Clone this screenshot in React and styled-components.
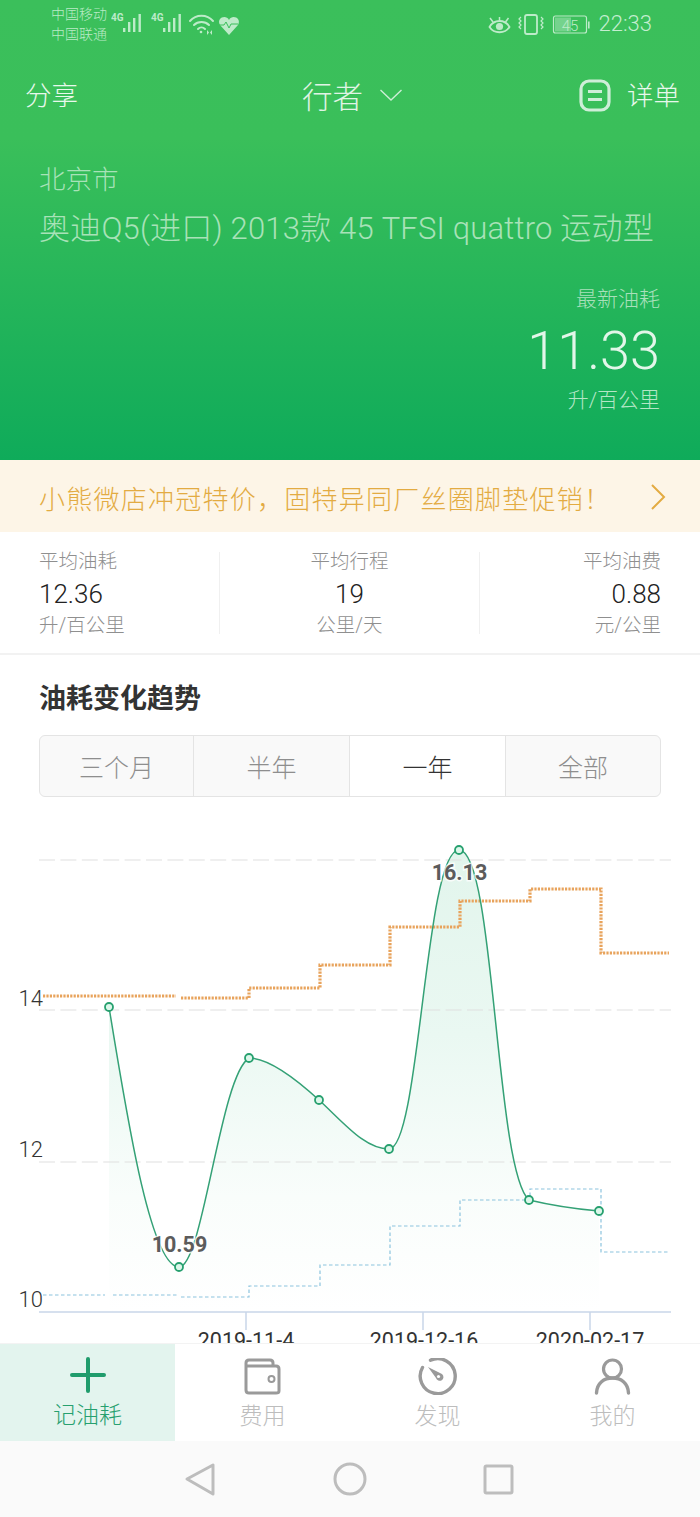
import React from "react";
import styled, { createGlobalStyle } from "styled-components";

const Global = createGlobalStyle`
  html, body { margin: 0; padding: 0; background: #fff; }
  body { font-family: Roboto, "Noto Sans CJK SC", sans-serif; }
  * { box-sizing: border-box; }
`;

const Page = styled.div`
  width: 700px; height: 1517px; display: flex; flex-direction: column; overflow: hidden; background: #fff;
`;
const Hero = styled.header`
  height: 460px; flex: none; display: flex; flex-direction: column;
  background: linear-gradient(180deg, #3bbf5b 0%, #3abf5a 30%, #0fab5a 100%);
  color: #e4f6e8;
`;
const StatusBar = styled.div`
  height: 46px; display: flex; align-items: flex-start; padding: 3px 48px 0 51px;
`;
const Carrier = styled.div`
  width: 60px; font-size: 14px; line-height: 20px; font-weight: 300; color: #b9eac6; white-space: nowrap; padding-top: 1px;
`;
const StatusIcons = styled.svg`
  display: block; flex: none; color: #bdebc9;
`;
const Time = styled.div`
  margin-left: 8px; font-size: 22px; line-height: 42px; font-weight: 300; color: #c4eed0;
`;
const Spacer = styled.div` flex: 1; `;
const NavRow = styled.nav`
  height: 100px; display: grid; grid-template-columns: 1fr auto 1fr; align-items: center; padding: 0 20px 0 25px;
`;
const NavText = styled.span`
  font-size: 26.5px; font-weight: 300; line-height: 36px; color: #e8f8ec; white-space: nowrap;
`;
const NavTitle = styled.div`
  display: flex; align-items: center; gap: 16px; margin-top: -3px; font-size: 30.5px; font-weight: 300; color: #e0f4e5;
`;
const NavRight = styled.div`
  display: flex; align-items: center; justify-content: flex-end; gap: 15px;
`;
const Info = styled.div`
  padding: 17px 40px 0 39px; color: #a8e2b8; font-weight: 300;
`;
const City = styled.div` font-size: 26.5px; line-height: 34px; `;
const Car = styled.div` margin-top: 12px; font-size: 31px; line-height: 40px; letter-spacing: 0.2px; white-space: nowrap; `;
const Latest = styled.div`
  margin-top: 36px; text-align: right; font-size: 21px; line-height: 28px; color: #a9e0bb;
`;
const Big = styled.div`
  margin-top: 8px; text-align: right; font-size: 54px; line-height: 60px; font-weight: 300; color: #e2f6e9;
`;
const Unit = styled.div`
  margin-top: 5px; text-align: right; font-size: 21px; line-height: 28px; color: #b4e6c6;
`;
const Banner = styled.div`
  height: 72px; flex: none; display: flex; align-items: center; justify-content: space-between;
  padding: 2px 34px 0 39px; background: #fdf5e7; color: #e3ab42; font-size: 26px; font-weight: 300; letter-spacing: 1.25px;
  white-space: nowrap;
`;
const Stats = styled.section`
  height: 123px; flex: none; padding: 20px 39px 0 39px; border-bottom: 2px solid #f2f2f2;
  display: grid; grid-template-columns: 180px 261px 181px; align-items: start;
`;
const Stat = styled.div`
  height: 82px; text-align: ${p => p.$align};
  border-left: ${p => (p.$divided ? "1px solid #f0f0f0" : "none")};
  border-right: ${p => (p.$divided ? "1px solid #f0f0f0" : "none")};
`;
const StatLabel = styled.div` font-size: 19.5px; line-height: 20px; font-weight: 300; color: #8f8f8f; `;
const StatValue = styled.div` margin-top: 4px; font-size: 26px; line-height: 36px; font-weight: 300; color: #222; `;
const StatUnit = styled.div` margin-top: 3px; font-size: 19.5px; line-height: 22px; font-weight: 300; color: #8f8f8f; `;
const SectionTitle = styled.h2`
  margin: 26px 39px 0; font-size: 27px; line-height: 36px; font-weight: 700; color: #333;
`;
const Tabs = styled.div`
  margin: 18px 39px 0; height: 62px; flex: none; display: grid; grid-template-columns: 153px 156px 156px 155px;
  border: 1px solid #e4e4e4; border-radius: 6px; overflow: hidden; background: #f9f9f9;
`;
const RangeTab = styled.div`
  display: flex; align-items: center; justify-content: center; font-size: 25px; font-weight: 300;
  color: ${p => (p.$active ? "#333" : "#8e8e8e")}; background: ${p => (p.$active ? "#fff" : "transparent")};
  border-left: ${p => (p.$first ? "none" : "1px solid #e4e4e4")};
`;
const ChartBox = styled.div` height: 546px; flex: none; overflow: hidden; `;
const ChartSvg = styled.svg` display: block; font-family: Roboto, sans-serif; `;
const TabBar = styled.div`
  height: 98px; flex: none; display: grid; grid-template-columns: repeat(4, 175px); background: #fff;
  border-top: 1px solid #f3f3f3;
`;
const TabItem = styled.div`
  display: flex; flex-direction: column; align-items: center; padding-top: ${p => (p.$active ? "13px" : "14px")};
  background: ${p => (p.$active ? "#e3f4ee" : "#fff")};
`;
const TabIcon = styled.svg` display: block; flex: none; `;
const TabLabel = styled.span`
  margin-top: ${p => (p.$active ? "8px" : "7px")}; font-size: 23px; line-height: 30px; font-weight: 300;
  color: ${p => (p.$active ? "#27a06f" : "#bdbdbd")};
`;
const SystemBar = styled.div`
  height: 76px; flex: none; background: #fafafa; display: flex; align-items: center; justify-content: center;
`;
const SystemIcons = styled.svg` display: block; `;

const pts = [[109,1007],[179,1267],[249,1058],[319,1100],[389,1149],[459,850],[529,1200],[599,1211]];
const curve = "M109 1007 C126 1110 150 1267 179 1267 C203 1267 220 1076 249 1058 C268 1058 295 1078 319 1100 C345 1124 365 1149 389 1149 C420 1149 425 850 459 850 C495 850 495 1170 529 1200 C550 1205 575 1209 599 1211";
const orangeD = "M43 996H176M181 998H249V988H320V965H390V927H460V901H530V889H601V953H669";
const blueD = "M43 1295H105M113 1295H178M181 1297H249V1286H320V1265H390V1226H460V1200H530V1189H601V1252H669";

function Chart() {
  return (
    <ChartSvg width="700" height="546" viewBox="0 797 700 546">
      <defs>
        <linearGradient id="area" gradientUnits="userSpaceOnUse" x1="0" y1="850" x2="0" y2="1312">
          <stop offset="0" stopColor="#e2f5ec" />
          <stop offset="0.4" stopColor="#eaf8f2" />
          <stop offset="0.75" stopColor="#f9fdfb" />
          <stop offset="1" stopColor="#ffffff" />
        </linearGradient>
      </defs>
      <path d={`${curve} V1312 H109 Z`} fill="url(#area)" />
      {[860, 1010, 1162].map(y => (
        <line key={y} x1="39" x2="671" y1={y} y2={y} stroke="#e0e0e0" strokeWidth="1.2" strokeDasharray="16 5.4" />
      ))}
      <path d={orangeD} fill="none" stroke="#e8a35c" strokeWidth="3.2" strokeDasharray="2.2 1.2" />
      <path d={blueD} fill="none" stroke="#8cc4de" strokeWidth="1.2" strokeDasharray="3.5 2.5" />
      <path d={curve} fill="none" stroke="#34a176" strokeWidth="1.5" />
      {pts.map(([x, y]) => (
        <circle key={x} cx={x} cy={y} r="4" fill="#dcf7ea" stroke="#27a06f" strokeWidth="1.8" />
      ))}
      <g fontSize="21.5" fontWeight="700" fill="#5c5c5c" textAnchor="middle" stroke="#ffffff" strokeWidth="3" strokeOpacity="0.75" style={{ paintOrder: "stroke" }}>
        <text x="179.5" y="1252">10.59</text>
        <text x="459.5" y="880">16.13</text>
      </g>
      <line x1="39" x2="671" y1="1312" y2="1312" stroke="#c9d6e8" strokeWidth="1.5" />
      {[246, 423, 590].map(x => (
        <line key={x} x1={x} x2={x} y1="1312" y2="1330" stroke="#c9d6e8" strokeWidth="1.5" />
      ))}
      <g fontSize="22" fill="#333" fontWeight="300" textAnchor="end">
        <text x="43" y="1006">14</text>
        <text x="43" y="1157">12</text>
        <text x="43" y="1307">10</text>
      </g>
      <g fontSize="21.5" fill="#333" textAnchor="middle">
        <text x="246" y="1348">2019-11-4</text>
        <text x="424" y="1348">2019-12-16</text>
        <text x="590" y="1348">2020-02-17</text>
      </g>
    </ChartSvg>
  );
}

const bars = x => (
  <g fill="currentColor">
    <rect x={x} y="28" width="2.4" height="4" />
    <rect x={x + 5} y="22" width="2.4" height="10" />
    <rect x={x + 10} y="18" width="2.4" height="14" />
    <rect x={x + 15.5} y="14" width="2.4" height="18" />
  </g>
);

function StatusLeft() {
  return (
    <StatusIcons width="132" height="40" viewBox="111 3 132 40">
      <g fontSize="10" fontWeight="700" fill="currentColor" fontFamily="Roboto, sans-serif">
        <text x="111" y="21">4G</text>
        <text x="151" y="21">4G</text>
      </g>
      {bars(123)}
      {bars(163)}
      <g fill="none" stroke="currentColor" strokeWidth="2" strokeLinecap="round">
        <path d="M190 21 C196 14 207 14 213 21" />
        <path d="M194 25 C198 21 205 21 209 25" />
        <path d="M198 29 C200 27 203 27 205 29" />
      </g>
      <circle cx="201" cy="32" r="1.3" fill="currentColor" />
      <path d="M207 30l2 2.5-2 2.5zM212 30l-2 2.5 2 2.5z" fill="currentColor" />
      <path d="M229 35 L220 25 C216 18 226 14 229 20 C232 14 242 18 238 25 Z" fill="currentColor" />
      <path d="M219 25h5l2-3 3 6 2-4h7" fill="none" stroke="#3bbf5b" strokeWidth="1" />
    </StatusIcons>
  );
}

function StatusRight() {
  return (
    <StatusIcons width="103" height="40" viewBox="490 3 103 40">
      <g fill="none" stroke="currentColor" strokeWidth="1.8">
        <path d="M491.5 27 C496 19 507 19 511.5 27 C507 34 496 34 491.5 27Z" />
        <path d="M492 18l3 4M507.5 22l3-4M501.5 17v3" strokeWidth="1.5" />
      </g>
      <circle cx="501.5" cy="26.5" r="3.6" fill="currentColor" />
      <rect x="527" y="15" width="12" height="19" rx="2" fill="none" stroke="currentColor" strokeWidth="1.8" />
      <path d="M523 17l-2 2 2 2-2 2 2 2-2 2 2 2M543 17l2 2-2 2 2 2-2 2 2 2-2 2" fill="none" stroke="currentColor" strokeWidth="1.2" />
      <rect x="555.5" y="16" width="33" height="17" rx="2" fill="none" stroke="currentColor" strokeWidth="1.2" />
      <rect x="557" y="17.5" width="16" height="14" fill="currentColor" opacity="0.45" />
      <rect x="590" y="21.5" width="1.6" height="7" fill="currentColor" />
      <text x="572" y="30.5" textAnchor="middle" fontSize="15" fontWeight="300" fill="currentColor" fontFamily="Roboto, sans-serif">45</text>
    </StatusIcons>
  );
}

function App() {
  return (
    <Page>
      <Global />
      <Hero>
        <StatusBar>
          <Carrier>中国移动<br />中国联通</Carrier>
          <StatusLeft />
          <Spacer />
          <StatusRight />
          <Time>22:33</Time>
        </StatusBar>
        <NavRow>
          <NavText>分享</NavText>
          <NavTitle>
            行者
            <svg width="24" height="14" viewBox="0 0 24 14">
              <path d="M1.5 2 L12 12 L22.5 2" fill="none" stroke="#cdeed6" strokeWidth="1.4" />
            </svg>
          </NavTitle>
          <NavRight>
            <svg width="33" height="34" viewBox="0 0 33 34">
              <rect x="2" y="2" width="28" height="29" rx="8" fill="none" stroke="#cfeed8" strokeWidth="3.2" />
              <path d="M9 12.5h14M9 20.5h14" stroke="#cfeed8" strokeWidth="3" />
            </svg>
            <NavText>详单</NavText>
          </NavRight>
        </NavRow>
        <Info>
          <City>北京市</City>
          <Car>奥迪Q5(进口) 2013款 45 TFSI quattro 运动型</Car>
          <Latest>最新油耗</Latest>
          <Big>11.33</Big>
          <Unit>升/百公里</Unit>
        </Info>
      </Hero>
      <Banner>
        <span>小熊微店冲冠特价，固特异同厂丝圈脚垫促销！</span>
        <svg width="16" height="28" viewBox="0 0 16 28">
          <path d="M2 2 L14 14 L2 26" fill="none" stroke="#e3ab42" strokeWidth="2" />
        </svg>
      </Banner>
      <Stats>
        <Stat $align="left">
          <StatLabel>平均油耗</StatLabel>
          <StatValue>12.36</StatValue>
          <StatUnit>升/百公里</StatUnit>
        </Stat>
        <Stat $align="center" $divided>
          <StatLabel>平均行程</StatLabel>
          <StatValue>19</StatValue>
          <StatUnit>公里/天</StatUnit>
        </Stat>
        <Stat $align="right">
          <StatLabel>平均油费</StatLabel>
          <StatValue>0.88</StatValue>
          <StatUnit>元/公里</StatUnit>
        </Stat>
      </Stats>
      <SectionTitle>油耗变化趋势</SectionTitle>
      <Tabs>
        <RangeTab $first>三个月</RangeTab>
        <RangeTab>半年</RangeTab>
        <RangeTab $active>一年</RangeTab>
        <RangeTab>全部</RangeTab>
      </Tabs>
      <ChartBox><Chart /></ChartBox>
      <TabBar>
        <TabItem $active>
          <TabIcon width="36" height="36" viewBox="0 0 36 36">
            <path d="M18 2v32M2 18h32" stroke="#1f9c6c" strokeWidth="4" strokeLinecap="round" />
          </TabIcon>
          <TabLabel $active>记油耗</TabLabel>
        </TabItem>
        <TabItem>
          <TabIcon width="37" height="37" viewBox="0 0 37 37">
            <path d="M2 9V5 Q2 2 5 2H26 Q29 2 29 5V8M2 8H32 Q35 8 35 11V33 Q35 35 32 35H5 Q2 35 2 32Z" fill="none" stroke="#9a9a9a" strokeWidth="3" strokeLinejoin="round" />
            <circle cx="27.5" cy="21" r="3" fill="none" stroke="#9a9a9a" strokeWidth="2" />
          </TabIcon>
          <TabLabel>费用</TabLabel>
        </TabItem>
        <TabItem>
          <TabIcon width="40" height="37" viewBox="0 0 40 37">
            <path d="M12.5 2.2 A17.5 17.5 0 1 1 4.5 9.5" fill="none" stroke="#9a9a9a" strokeWidth="3.4" strokeLinecap="round" />
            <path d="M10 9 L24 16 A3.8 3.8 0 1 1 18 20 Z" fill="#9a9a9a" />
            <circle cx="20.5" cy="18.5" r="1.6" fill="#fff" />
          </TabIcon>
          <TabLabel>发现</TabLabel>
        </TabItem>
        <TabItem>
          <TabIcon width="37" height="37" viewBox="0 0 37 37">
            <circle cx="18.5" cy="11" r="9" fill="none" stroke="#9a9a9a" strokeWidth="3.2" />
            <path d="M2.5 35 C3 25 10 20 18.5 20 C27 20 34 25 34.5 35" fill="none" stroke="#9a9a9a" strokeWidth="3.4" strokeLinecap="round" />
          </TabIcon>
          <TabLabel>我的</TabLabel>
        </TabItem>
      </TabBar>
      <SystemBar>
        <SystemIcons width="700" height="76" viewBox="0 1441 700 76">
          <path d="M213 1465 V1494 L187 1479 Z" fill="none" stroke="#bdbdbd" strokeWidth="3" strokeLinejoin="round" />
          <circle cx="350" cy="1479" r="15" fill="none" stroke="#bdbdbd" strokeWidth="3" />
          <rect x="485" y="1466" width="27" height="27" rx="1.5" fill="none" stroke="#bdbdbd" strokeWidth="3" />
        </SystemIcons>
      </SystemBar>
    </Page>
  );
}

export default App;
